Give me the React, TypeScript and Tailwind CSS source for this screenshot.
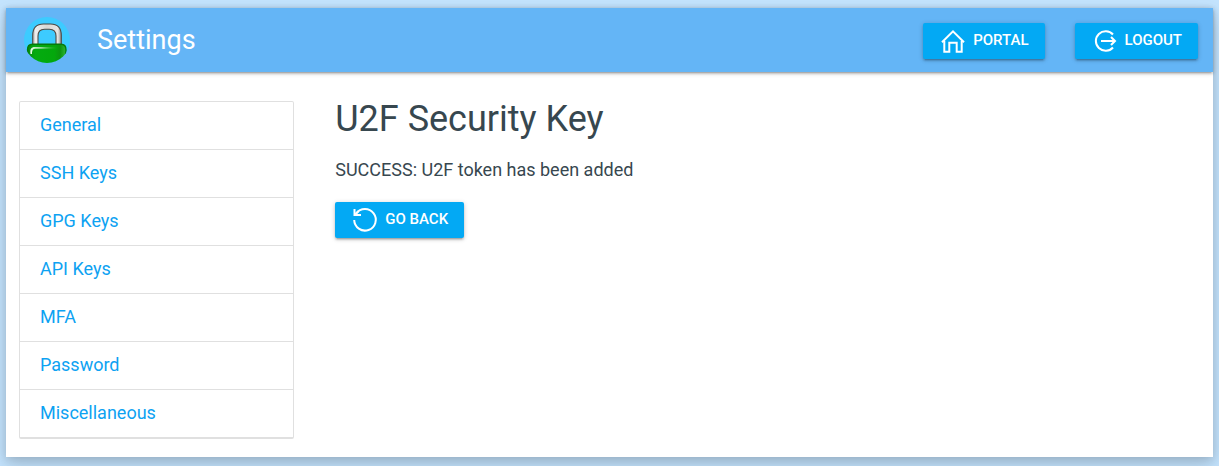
import type { ReactNode } from "react";

const links = ["General", "SSH Keys", "GPG Keys", "API Keys", "MFA", "Password", "Miscellaneous"];

function LockLogo() {
  return (
    <svg className="size-[46px] shrink-0" viewBox="0 0 46 46" role="img" aria-label="Lock">
      <defs>
        <clipPath id="disc">
          <circle cx="23" cy="23" r="23" />
        </clipPath>
        <linearGradient id="steel" x1="0" x2="1" y1="0" y2="0">
          <stop offset="0" stopColor="#a8a8a6" />
          <stop offset="0.1" stopColor="#efefef" />
          <stop offset="0.5" stopColor="#d8d8d4" />
          <stop offset="0.88" stopColor="#e6e6e4" />
          <stop offset="1" stopColor="#8a8a88" />
        </linearGradient>
        <linearGradient id="body" x1="0" x2="1" y1="0" y2="0">
          <stop offset="0" stopColor="#078a0d" />
          <stop offset="0.2" stopColor="#04ab10" />
          <stop offset="0.7" stopColor="#04a80c" />
          <stop offset="0.85" stopColor="#0c950f" />
          <stop offset="1" stopColor="#2fb835" />
        </linearGradient>
        <linearGradient id="shine" x1="0" x2="1" y1="0" y2="0">
          <stop offset="0" stopColor="#eaffea" />
          <stop offset="0.4" stopColor="#8fd893" />
          <stop offset="1" stopColor="#06a30d" stopOpacity="0" />
        </linearGradient>
      </defs>
      <g clipPath="url(#disc)">
        <rect width="46" height="46" fill="#3dcbff" />
        <path
          d="M8.700 31V18.500C8.700 11 12.500 7 19.500 7h7C33.500 7 37.300 11 37.300 18.500V31h-5.300V19c0-4.500-2.500-6.800-6.500-6.800h-5C16.500 12.200 14 14.500 14 19v12Z"
          fill="url(#steel)"
          stroke="#4e4b45"
          strokeWidth="1.1"
        />
        <path
          d="M3.500 33c0-4 1.500-5.700 5-5.700h28.500c3.500 0 5 1.700 5 5.700 0 5-1 9-4 14H7.500C4.500 42 3.500 38 3.500 33Z"
          fill="url(#body)"
          stroke="#067a0b"
          strokeWidth="1.4"
        />
        <path d="M6.500 37c-.6-5 .5-7 4.500-7h24v1.800H12c-3 0-4 1.200-4 5.200Z" fill="url(#shine)" />
      </g>
    </svg>
  );
}

function HomeIcon() {
  return (
    <svg className="size-7 shrink-0" viewBox="0 0 28 28" fill="none" stroke="currentColor" strokeWidth="2" aria-hidden="true">
      <path d="M3 15.300 14 4.300l11 11" />
      <path d="M5.300 14v10.800h5v-9h7.400v9h5V14" />
    </svg>
  );
}

function LogoutIcon() {
  return (
    <svg className="size-7 shrink-0" viewBox="0 0 28 28" fill="none" stroke="currentColor" strokeWidth="2" aria-hidden="true">
      <path d="M22 7.500A9.800 9.800 0 1 0 22 20.500" />
      <path d="M10 14H23.500M20 10l4 4-4 4" />
    </svg>
  );
}

function BackIcon() {
  return (
    <svg className="size-7 shrink-0" viewBox="0 0 28 28" fill="none" stroke="currentColor" strokeWidth="2" aria-hidden="true">
      <path d="M3.200 14A10.800 10.800 0 1 0 5.200 7.500" />
      <path d="M3.500 3v6H10" />
      <path d="M4 8.500 7.500 5.300" />
    </svg>
  );
}

function ActionButton({ icon, children }: { icon: ReactNode; children: ReactNode }) {
  return (
    <button
      type="button"
      className="flex h-9 cursor-pointer items-center gap-1.5 rounded-xs bg-[#03a9f4] px-4 text-[15px] leading-8 font-medium whitespace-nowrap text-white uppercase shadow-[0_2px_2px_0_rgba(0,0,0,0.14),0_3px_1px_-2px_rgba(0,0,0,0.12),0_1px_5px_0_rgba(0,0,0,0.2)]"
    >
      {icon}
      <span className="pb-0.5">{children}</span>
    </button>
  );
}

export default function App() {
  return (
    <div className="min-h-screen bg-[#c3e3fd] px-1.5 pt-2 pb-[9px] font-[Roboto,sans-serif] text-lg text-[#37474f]">
      <div className="bg-white shadow-[0_8px_17px_0_rgba(0,0,0,0.16),0_2px_8px_0_rgba(0,0,0,0.1)]">
        <header className="flex h-16 items-center justify-between bg-[#64b5f6] pr-[15px] pl-[18px] text-white shadow-[0_2px_2px_0_rgba(0,0,0,0.14),0_3px_1px_-2px_rgba(0,0,0,0.12),0_1px_5px_0_rgba(0,0,0,0.2)]">
          <div className="flex items-center gap-[27px]">
            <LockLogo />
            <span className="text-[27px] leading-16">Settings</span>
          </div>
          <div className="flex gap-[30px] pt-0.5">
            <ActionButton icon={<HomeIcon />}>Portal</ActionButton>
            <ActionButton icon={<LogoutIcon />}>Logout</ActionButton>
          </div>
        </header>
        <div className="flex gap-[21px] px-[13px] pt-[29px] pb-[18px]">
          <div className="w-1/4 shrink-0 pr-5">
            <nav className="rounded-xs border border-b-2 border-[#e0e0e0]">
              <ul className="divide-y divide-[#e0e0e0]">
                {links.map((label) => (
                  <li key={label}>
                    <a href="#" className="block px-5 pt-[9px] pb-[11px] leading-[27px] text-[#0da2f2]">
                      {label}
                    </a>
                  </li>
                ))}
              </ul>
            </nav>
          </div>
          <main className="flex flex-col items-start">
            <h1 className="text-4xl leading-9">U2F Security Key</h1>
            <p className="my-[19px] leading-[27px]">SUCCESS: U2F token has been added</p>
            <ActionButton icon={<BackIcon />}>Go back</ActionButton>
          </main>
        </div>
      </div>
    </div>
  );
}
